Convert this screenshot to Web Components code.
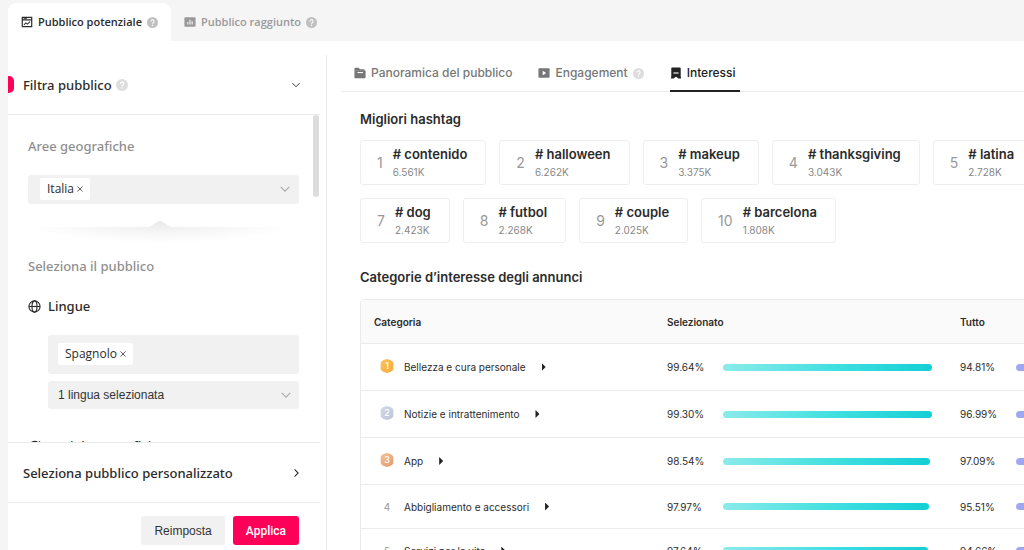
<!DOCTYPE html>
<html lang="it">
<head>
<meta charset="utf-8">
<meta name="viewport" content="width=device-width, initial-scale=1">
<title>Pubblico potenziale</title>
<style>
  html, body { margin: 0; height: 100%; }
  body {
    --ui: "Open Sans", "Noto Sans", sans-serif;
    --title: "Noto Sans", "Open Sans", sans-serif;
    --text: Inter, Roboto, sans-serif;
    --control: "Liberation Sans", Arial, sans-serif;
    --ink: #2b2b2b;
    --line: #ebebeb;
    --field: #f1f1f1;
    --accent: #fe0058;
    color: var(--ink);
    background: #f5f5f5;
    font-family: var(--ui);
    overflow: hidden;
  }
</style>
</head>
<body>
<audience-page></audience-page>

<script>
const define = (name, html, setup) => {
  const template = document.createElement('template');
  template.innerHTML = html;
  customElements.define(name, class extends HTMLElement {
    static observedAttributes = ['name'];
    constructor() {
      super();
      this.attachShadow({ mode: 'open' }).append(template.content.cloneNode(true));
    }
    connectedCallback() { if (setup) setup(this, this.shadowRoot); }
    attributeChangedCallback() { if (setup && this.isConnected) setup(this, this.shadowRoot); }
  });
};

/* Round question mark */
define('help-mark', `
<style>
  :host { display: block; flex: none; width: 11px; height: 11px; color: #c0c0c0; }
  svg { display: block; width: 100%; height: 100%; }
</style>
<svg viewBox="0 0 12 12" aria-hidden="true"><circle cx="6" cy="6" r="6" fill="currentColor"/>
<path d="M4.3 4.8a1.7 1.7 0 1 1 2.5 1.5c-.6.3-.8.5-.8 1.1" fill="none" stroke="#fff" stroke-width="1.1"/><circle cx="6" cy="9" r=".7" fill="#fff"/></svg>`);

/* Icons used across the page */
const ICONS = {
  window: '<path d="M1.500 1.500h11v3h-11zM1.500 4.500v8h11v-8" fill="none" stroke="currentColor" stroke-width="1.400"/><path d="M3.500 10.500l2-2.500 2 1.500 3-3" fill="none" stroke="currentColor" stroke-width="1.200"/><path d="M3 3h4" stroke="currentColor"/>',
  chart: '<rect x=".5" y="1.500" width="13" height="11" rx="1" fill="currentColor"/><path d="M4.500 10V7M7 10V4.500M9.500 10V6" stroke="#f5f5f5" stroke-width="1.300"/>',
  folder: '<path d="M.5 2a1 1 0 0 1 1-1h4L7 2.500h4.500a1 1 0 0 1 1 1v.8H.5z" fill="currentColor"/><path d="M.5 4h12a1 1 0 0 1 1 1v7a1 1 0 0 1-1 1h-11a1 1 0 0 1-1-1z" fill="currentColor"/><path d="M4 6.500h6.500" stroke="#fff" stroke-width="1.200"/>',
  play: '<rect x=".5" y="1.500" width="13" height="11" rx="1" fill="currentColor"/><path d="M5.500 4.500v5L9.500 7z" fill="#fff"/>',
  bookmark: '<path d="M1.500 1.500a1 1 0 0 1 1-1h9a1 1 0 0 1 1 1V11l.6 2.500H10L7 11.500l-3 2H.9L1.500 11z" fill="currentColor"/><path d="M4 7h6" stroke="#fff" stroke-width="1.300"/>',
  globe: '<g fill="none" stroke="currentColor" stroke-width="1.200"><circle cx="7" cy="7" r="6"/><ellipse cx="7" cy="7" rx="2.700" ry="6"/><path d="M1 7h12"/></g>',
  refresh: '<path d="M1.500 7a5.500 5.500 0 0 1 9.500-3.800M12.800 1.500L7.500 7 5 5" fill="none" stroke="currentColor" stroke-width="1.300"/><path d="M12.500 6.500A5.500 5.500 0 1 1 1.500 7" fill="none" stroke="currentColor" stroke-width="1.300"/>',
  down: '<path d="M2 4.500L7 9.500l5-5" fill="none" stroke="currentColor" stroke-width="1.300"/>',
  right: '<path d="M5 2l5 5-5 5" fill="none" stroke="currentColor" stroke-width="1.500"/>'
};
define('ui-icon', `
<style>
  :host { display: block; flex: none; width: 12px; height: 12px; }
  svg { display: block; width: 100%; height: 100%; }
</style>
<svg viewBox="0 0 14 14" aria-hidden="true"></svg>`,
(el, root) => { root.querySelector('svg').innerHTML = ICONS[el.getAttribute('name')] || ''; });

/* Tab of the grey strip at the top */
define('page-tab', `
<style>
  :host { display: block; }
  button {
    display: flex; align-items: center; gap: 5px; height: 38px; padding: 0 13px;
    border: 0; border-radius: 8px 8px 0 0; background: none; color: #999;
    font: 600 11px/16px var(--ui);
  }
  :host([selected]) button { background: #fff; color: var(--ink); }
</style>
<button type="button" role="tab"><ui-icon></ui-icon><slot></slot><help-mark></help-mark></button>`,
(el, root) => { root.querySelector('ui-icon').setAttribute('name', el.getAttribute('icon')); });

/* Tab above the report */
define('view-tab', `
<style>
  :host { display: block; }
  button {
    display: flex; align-items: center; gap: 5px; height: 36px; padding: 0;
    border: 0; border-bottom: 2px solid transparent; background: none; color: #777;
    font: 500 12px/16px var(--text);
  }
  :host([selected]) button { border-color: #222; color: #222; padding-right: 4px; }
  help-mark { color: #ddd; }
  :host(:not([help])) help-mark { display: none; }
</style>
<button type="button" role="tab"><ui-icon></ui-icon><slot></slot><help-mark></help-mark></button>`,
(el, root) => { root.querySelector('ui-icon').setAttribute('name', el.getAttribute('icon')); });

/* Removable value */
define('value-chip', `
<style>
  :host { display: flex; align-items: center; gap: 3px; height: 22px; padding: 0 7px; border-radius: 2px; background: #fff; font: 12px/16px var(--ui); flex: none; }
  button { display: block; width: 6px; height: 6px; padding: 0; border: 0; background: none; color: #444; }
  svg { display: block; width: 6px; height: 6px; }
</style>
<slot></slot><button type="button" aria-label="Rimuovi"><svg viewBox="0 0 7 7"><path d="M.5.5l6 6M6.500.5l-6 6" stroke="currentColor" fill="none"/></svg></button>`);

define('action-button', `
<style>
  :host { display: block; }
  button { display: block; height: 29px; padding: 0 13px; border: 0; border-radius: 3px; background: var(--field); color: #333; font: 12px/16px var(--control); }
  :host([primary]) button { background: var(--accent); color: #fff; font: 500 12px/16px Roboto, sans-serif; }
</style>
<button type="button"><slot></slot></button>`);

define('filter-panel', `
<style>
  :host { display: flex; flex-direction: column; width: 312px; min-height: 0; margin-top: 14px; }
  h2, h3, h4 { margin: 0; font: 500 13px/20px var(--title); }
  h3 { color: #8f8f8f; }
  h4 { display: flex; align-items: center; gap: 7px; }
  h4 ui-icon { width: 13px; height: 13px; }
  .head { display: flex; align-items: center; height: 59px; border-bottom: 1px solid var(--line); }
  .head::before { content: ""; width: 6px; height: 17px; margin-right: 9px; border-radius: 0 5px 5px 0; background: var(--accent); }
  .head help-mark { width: 12px; height: 12px; margin-left: 4px; color: #ddd; }
  .head ui-icon, .custom ui-icon { width: 10px; height: 10px; margin: 0 19px 0 auto; }
  .body { position: relative; flex: 1; min-height: 0; overflow: hidden; }
  .thumb { position: absolute; top: 0; right: 1px; width: 6px; height: 82px; border-radius: 3px; background: #ddd; }
  .content { padding: 21px 21px 0 20px; }
  .field { display: flex; align-items: center; margin-top: 19px; padding: 3px 8px 4px 12px; border-radius: 3px; background: var(--field); }
  .field input { flex: 1; min-width: 0; padding: 0; border: 0; background: none; outline: 0; }
  .field ui-icon, .pick ui-icon { width: 12px; height: 12px; color: #aaa; }
  .notch { display: block; width: 100%; height: 34px; margin: 17px 0 1px; }
  .group { margin: 0 0 0 20px; }
  .group .field { padding: 8px 10px 9px; }
  h4.lang { margin-top: 20px; }
  h4.demo { margin-top: 27px; }
  .pick { display: flex; align-items: center; height: 28px; margin-top: 7px; padding: 0 7px 0 10px; border-radius: 3px; background: var(--field); }
  select { flex: 1; appearance: none; padding: 0; border: 0; background: none; color: #333; font: 12px/16px var(--control); }
  .custom { display: flex; align-items: center; height: 59px; padding-left: 15px; border: solid var(--line); border-width: 1px 0; }
  .actions { display: flex; justify-content: flex-end; gap: 8px; padding: 13px 21px 5px 0; }
</style>
<div class="head"><h2>Filtra pubblico</h2><help-mark></help-mark><ui-icon name="down"></ui-icon></div>
<div class="body">
  <div class="content">
    <h3>Aree geografiche</h3>
    <div class="field"><value-chip>Italia</value-chip><input aria-label="Aree geografiche"><ui-icon name="down"></ui-icon></div>
    <svg class="notch" viewBox="0 0 271 34" preserveAspectRatio="none" aria-hidden="true">
      <defs>
        <radialGradient id="shade" gradientUnits="userSpaceOnUse" cx="132" cy="0" r="136" gradientTransform="matrix(1 0 0 .16 0 0)">
          <stop offset="0" stop-color="#e9e9e9"/><stop offset=".5" stop-color="#f5f5f5"/><stop offset="1" stop-color="#fff"/>
        </radialGradient>
      </defs>
      <path d="M0 6h120c4 0 8-6 12-6s8 6 12 6h127v28H0z" fill="url(#shade)"/>
    </svg>
    <h3>Seleziona il pubblico</h3>
    <h4 class="lang"><ui-icon name="globe"></ui-icon>Lingue</h4>
    <div class="group">
      <div class="field"><value-chip>Spagnolo</value-chip><input aria-label="Lingue"></div>
      <div class="pick"><select aria-label="Lingue selezionate"><option>1 lingua selezionata</option></select><ui-icon name="down"></ui-icon></div>
    </div>
    <h4 class="demo"><ui-icon name="refresh"></ui-icon>Dati demografici</h4>
  </div>
  <div class="thumb"></div>
</div>
<div class="custom"><h2>Seleziona pubblico personalizzato</h2><ui-icon name="right"></ui-icon></div>
<div class="actions"><action-button>Reimposta</action-button><action-button primary>Applica</action-button></div>`);

define('hashtag-card', `
<style>
  :host { display: grid; grid-template-columns: auto auto; align-items: center; column-gap: 10px; height: 43px; padding: 0 18px 0 16px; border: 1px solid #eee; border-radius: 3px; font-family: var(--text); }
  .rank { font-size: 14px; color: #999; }
  .name { display: block; font: 600 13px/18px var(--text); white-space: nowrap; }
  .count { display: block; font: 10px/18px var(--text); color: #888; }
</style>
<span class="rank"></span><div><span class="name"><slot></slot></span><span class="count"></span></div>`,
(el, root) => {
  root.querySelector('.rank').textContent = el.getAttribute('rank');
  root.querySelector('.count').textContent = el.getAttribute('count');
});

/* Medal for the first three places, plain number after them */
const MEDALS = { 1: ['#fbc55c', '#f5a93a'], 2: ['#d3d9e6', '#bcc5d8'], 3: ['#f2c29b', '#e09c70'] };
define('rank-badge', `
<style>
  :host { display: block; flex: none; width: 14px; font: 10px/14px var(--text); color: #999; text-align: center; }
  .medal { display: flex; align-items: center; justify-content: center; height: 14px; margin-bottom: 2px; color: #fff; font-size: 9px; font-weight: 500;
    clip-path: polygon(50% 0, 75% 7%, 94% 22%, 96% 50%, 94% 78%, 75% 93%, 50% 100%, 25% 93%, 6% 78%, 4% 50%, 6% 22%, 25% 7%); }
</style>
<div></div>`,
(el, root) => {
  const rank = el.getAttribute('rank'), box = root.querySelector('div');
  box.textContent = rank;
  if (MEDALS[rank]) {
    box.className = 'medal';
    box.style.background = 'linear-gradient(135deg, ' + MEDALS[rank].join(', ') + ')';
  }
});

define('share-bar', `
<style>
  :host { display: flex; align-items: center; }
  span { width: 56px; }
  i { display: block; width: 210px; }
  b { display: block; height: 7px; border-radius: 4px; background: linear-gradient(90deg, #8aebea, #3fdfe0 55%, #14cfd5); }
  :host([tone=all]) b { background: linear-gradient(90deg, #a0a8f2, #6f7be8); }
</style>
<span></span><i><b></b></i>`,
(el, root) => {
  const value = el.getAttribute('value');
  root.querySelector('span').textContent = value;
  root.querySelector('b').style.width = value;
});

const ROWS = [
  [1, 'Bellezza e cura personale', '99.64%', '94.81%'],
  [2, 'Notizie e intrattenimento', '99.30%', '96.99%'],
  [3, 'App', '98.54%', '97.09%'],
  [4, 'Abbigliamento e accessori', '97.97%', '95.51%'],
  [5, 'Servizi per la vita', '97.64%', '94.66%']
];
define('interest-table', `
<style>
  :host { display: block; min-width: 879px; border: 1px solid var(--line); border-radius: 4px; font: 10px/14px var(--text); overflow: hidden; }
  table { width: 100%; table-layout: fixed; border-collapse: collapse; font: inherit; }
  th { height: 43px; padding: 0 13px; background: #fafafa; font-weight: 600; text-align: left; }
  td { height: 43px; padding: 0 13px; border-top: 1px solid var(--line); }
  tr.top td { height: 46px; }
  .name { display: flex; align-items: center; padding-left: 6px; }
  rank-badge { margin-right: 10px; }
  button { width: 4px; height: 8px; margin-left: 16px; padding: 0; border: 0; background: #222; clip-path: polygon(0 0, 100% 50%, 0 100%); }
</style>
<table><thead><tr><th>Categoria</th><th>Selezionato</th><th>Tutto</th></tr></thead><tbody></tbody></table>`,
(el, root) => {
  root.querySelector('tbody').innerHTML = ROWS.map(([rank, name, selected, all]) => `
    <tr${rank < 4 ? ' class="top"' : ''}>
      <td><div class="name"><rank-badge rank="${rank}"></rank-badge>${name}<button type="button" aria-label="Espandi ${name}"></button></div></td>
      <td><share-bar value="${selected}"></share-bar></td>
      <td><share-bar tone="all" value="${all}"></share-bar></td>
    </tr>`).join('');
});

define('report-view', `
<style>
  :host { display: block; min-width: 0; overflow: hidden; }
  nav { display: flex; gap: 26px; padding: 1px 0 0 13px; margin-bottom: 17px; box-shadow: inset 0 -1px var(--line); }
  section { padding-left: 19px; }
  h2 { margin: 0; font: 600 13px/20px var(--text); }
  .tags { display: flex; flex-wrap: wrap; gap: 13px; width: max(100%, 690px); margin: 11px 0 24px; }
  interest-table { margin-top: 12px; }
</style>
<nav role="tablist">
  <view-tab icon="folder">Panoramica del pubblico</view-tab>
  <view-tab icon="play" help>Engagement</view-tab>
  <view-tab icon="bookmark" selected>Interessi</view-tab>
</nav>
<section>
  <h2>Migliori hashtag</h2>
  <div class="tags">
    <hashtag-card rank="1" count="6.561K"># contenido</hashtag-card>
    <hashtag-card rank="2" count="6.262K"># halloween</hashtag-card>
    <hashtag-card rank="3" count="3.375K"># makeup</hashtag-card>
    <hashtag-card rank="4" count="3.043K"># thanksgiving</hashtag-card>
    <hashtag-card rank="5" count="2.728K"># latina</hashtag-card>
    <hashtag-card rank="7" count="2.423K"># dog</hashtag-card>
    <hashtag-card rank="8" count="2.268K"># futbol</hashtag-card>
    <hashtag-card rank="9" count="2.025K"># couple</hashtag-card>
    <hashtag-card rank="10" count="1.808K"># barcelona</hashtag-card>
  </div>
  <h2>Categorie d’interesse degli annunci</h2>
  <interest-table></interest-table>
</section>`);

define('audience-page', `
<style>
  :host { display: flex; flex-direction: column; height: 100vh; padding-left: 8px; box-sizing: border-box; }
  .tabs { display: flex; padding-top: 3px; }
  .main { flex: 1; min-height: 0; display: grid; grid-template-columns: 312px 1fr; column-gap: 6px; background: #fff; }
  .right { display: grid; min-width: 0; min-height: 0; margin-top: 14px; padding-left: 14px; border-left: 1px solid var(--line); overflow: hidden; }
</style>
<div class="tabs" role="tablist">
  <page-tab icon="window" selected>Pubblico potenziale</page-tab>
  <page-tab icon="chart">Pubblico raggiunto</page-tab>
</div>
<div class="main">
  <filter-panel></filter-panel>
  <div class="right"><report-view></report-view></div>
</div>`);
</script>
</body>
</html>
